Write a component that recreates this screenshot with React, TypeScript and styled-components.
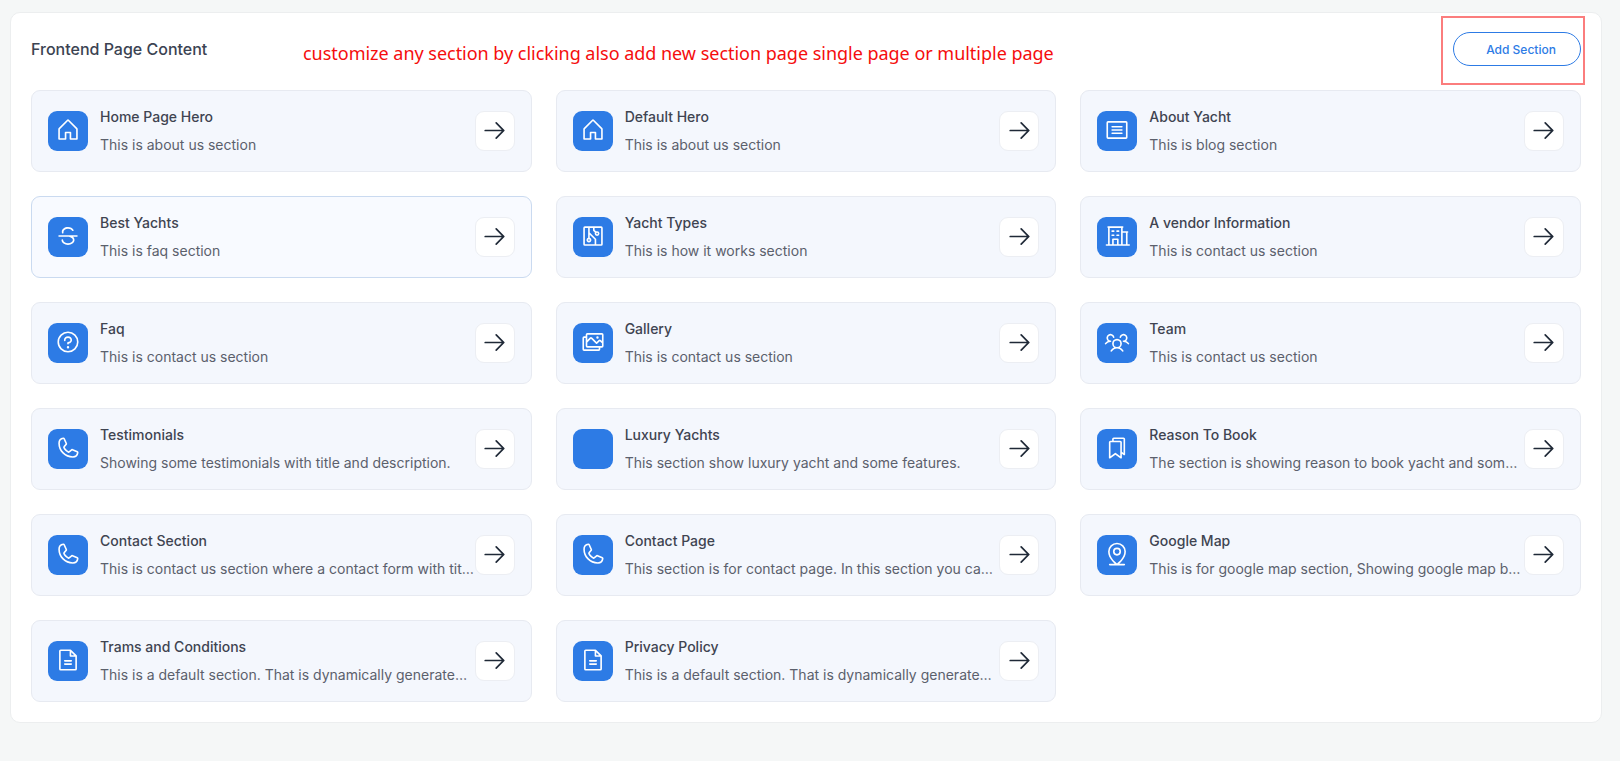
import React from "react";
import styled, { createGlobalStyle } from "styled-components";
import {
  PiHouse, PiArticle, PiTextStrikethrough, PiCircuitry, PiBuildingOffice, PiQuestion,
  PiImages, PiUsersThree, PiPhone, PiBookmarks, PiMapPinLine, PiFileText, PiArrowRight,
} from "react-icons/pi";

const Global = createGlobalStyle`
  html, body { margin: 0; padding: 0; background: #f5f7f7; height: 100%; overflow: hidden; }
  * { box-sizing: border-box; }
  body { font-family: Inter, "Liberation Sans", sans-serif; }
`;

const Page = styled.div`
  padding: 12px 18px 38px 10px;
`;

const Panel = styled.section`
  position: relative;
  background: #fff;
  border: 1px solid #eceeef;
  border-radius: 10px;
  padding: 19px 20px 20px;
  height: 711px;
`;

const Header = styled.header`
  display: flex;
  align-items: center;
  height: 37px;
  margin-bottom: 21px;
`;

const Title = styled.h2`
  margin: 0;
  width: 272px;
  font-size: 16px;
  font-weight: 500;
  color: #3b4352;
  position: relative;
  top: -2px;
`;

const Note = styled.span`
  flex: 1;
  font-family: "Noto Sans", sans-serif;
  font-size: 18px;
  letter-spacing: -0.023px;
  color: #f50d0d;
  position: relative;
  top: 2px;
`;

const AddButton = styled.button`
  width: 128px;
  height: 34px;
  margin-top: -3px;
  border: 1px solid #2d7be5;
  border-radius: 17px;
  background: #fff;
  color: #2d7be5;
  font: 500 12px Inter, sans-serif;
  padding: 0 0 0 8px;
`;

const Marker = styled.div`
  position: absolute;
  left: 1430px;
  top: 3px;
  width: 144px;
  height: 69px;
  border: 2px solid #fb7d7d;
  pointer-events: none;
`;

const Grid = styled.div`
  display: grid;
  grid-template-columns: repeat(3, minmax(0, 1fr));
  gap: 24px;
`;

const Card = styled.article<{ $active?: boolean }>`
  display: flex;
  align-items: center;
  height: 82px;
  padding: 0 16px;
  background: ${(p) => (p.$active ? "#f8faff" : "#f4f7fd")};
  border: 1px solid ${(p) => (p.$active ? "#cadaf0" : "#e7eaf1")};
  border-radius: 9px;
`;

const IconBox = styled.div`
  flex: none;
  width: 40px;
  height: 40px;
  margin-right: 12px;
  padding-bottom: 2px;
  border-radius: 9px;
  background: #2d7be5;
  color: #fff;
  display: flex;
  align-items: center;
  justify-content: center;
  font-size: 26px;
`;

const Text = styled.div`
  flex: 1;
  min-width: 0;
  display: flex;
  flex-direction: column;
  gap: 10px;
  margin-top: -1px;
`;

const Name = styled.div`
  font-size: 14px;
  line-height: 18px;
  font-weight: 500;
  color: #3f4451;
`;

const Desc = styled.div`
  font-size: 14px;
  line-height: 18px;
  color: #5b606c;
  white-space: nowrap;
  overflow: hidden;
  text-overflow: ellipsis;
`;

const ArrowButton = styled.div`
  flex: none;
  width: 40px;
  height: 40px;
  padding-bottom: 2px;
  border: 1px solid #eceef3;
  border-radius: 9px;
  background: #fff;
  color: #1f2937;
  display: flex;
  align-items: center;
  justify-content: center;
  font-size: 27px;
`;

const items: { name: string; desc: string; Icon: React.ComponentType | null; active?: boolean }[] = [
  { name: "Home Page Hero", desc: "This is about us section", Icon: PiHouse },
  { name: "Default Hero", desc: "This is about us section", Icon: PiHouse },
  { name: "About Yacht", desc: "This is blog section", Icon: PiArticle },
  { name: "Best Yachts", desc: "This is faq section", Icon: PiTextStrikethrough, active: true },
  { name: "Yacht Types", desc: "This is how it works section", Icon: PiCircuitry },
  { name: "A vendor Information", desc: "This is contact us section", Icon: PiBuildingOffice },
  { name: "Faq", desc: "This is contact us section", Icon: PiQuestion },
  { name: "Gallery", desc: "This is contact us section", Icon: PiImages },
  { name: "Team", desc: "This is contact us section", Icon: PiUsersThree },
  { name: "Testimonials", desc: "Showing some testimonials with title and description.", Icon: PiPhone },
  { name: "Luxury Yachts", desc: "This section show luxury yacht and some features.", Icon: null },
  { name: "Reason To Book", desc: "The section is showing reason to book yacht and some features for users.", Icon: PiBookmarks },
  { name: "Contact Section", desc: "This is contact us section where a contact form with title and description.", Icon: PiPhone },
  { name: "Contact Page", desc: "This section is for contact page. In this section you can add details.", Icon: PiPhone },
  { name: "Google Map", desc: "This is for google map section, Showing google map by location.", Icon: PiMapPinLine },
  { name: "Trams and Conditions", desc: "This is a default section. That is dynamically generated by the system.", Icon: PiFileText },
  { name: "Privacy Policy", desc: "This is a default section. That is dynamically generated by the system.", Icon: PiFileText },
];

export default function App() {
  return (
    <>
      <Global />
      <Page>
        <Panel>
          <Header>
            <Title>Frontend Page Content</Title>
            <Note>customize any section by clicking also add new section page single page or multiple page</Note>
            <AddButton>Add Section</AddButton>
          </Header>
          <Marker />
          <Grid>
            {items.map(({ name, desc, Icon, active }) => (
              <Card key={name} $active={active}>
                <IconBox>{Icon && <Icon />}</IconBox>
                <Text>
                  <Name>{name}</Name>
                  <Desc>{desc}</Desc>
                </Text>
                <ArrowButton><PiArrowRight /></ArrowButton>
              </Card>
            ))}
          </Grid>
        </Panel>
      </Page>
    </>
  );
}
